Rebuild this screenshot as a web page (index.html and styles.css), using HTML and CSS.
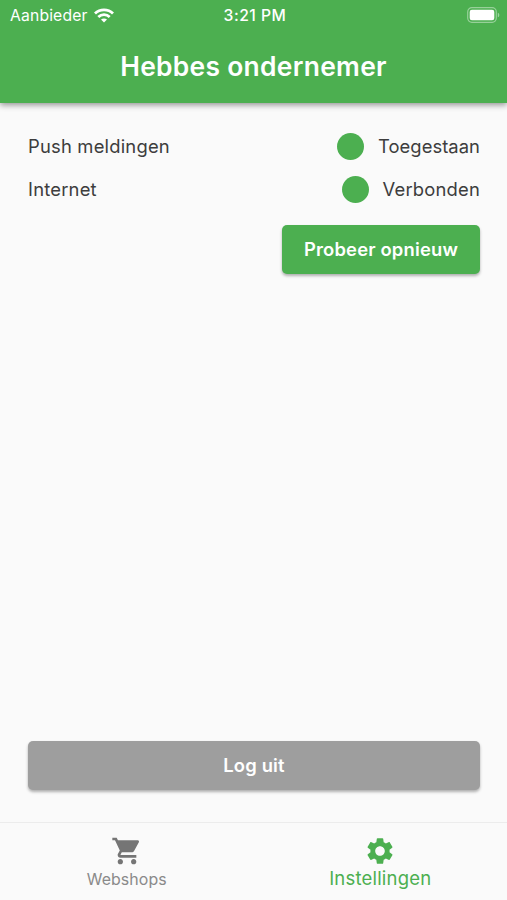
FILE: index.html
```html
<!DOCTYPE html>
<html lang="nl">
<head>
<meta charset="utf-8">
<meta name="viewport" content="width=device-width">
<title>Hebbes ondernemer</title>
<link rel="stylesheet" href="styles.css">
</head>
<body>
<div class="app">
  <header class="app-bar">
    <div class="status">
      <div class="carrier"><span>Aanbieder</span>
        <svg class="wifi" viewBox="0 0 20 15" fill="none" stroke="#fff" stroke-width="2.8"><path d="M1 5.6C6 .7 14 .7 19 5.6M4.3 9C7.6 5.9 12.4 5.9 15.7 9"/><path d="M10 14.6 7 11.6c1.7-1.5 4.3-1.5 6 0z" fill="#fff" stroke="none"/></svg>
      </div>
      <span class="clock">3:21 PM</span>
      <svg class="battery" viewBox="0 0 33 16"><rect x=".7" y=".7" width="28.6" height="14.6" rx="4.2" fill="none" stroke="#fff" stroke-opacity=".42" stroke-width="1.2"/><rect x="2.7" y="2.7" width="24.6" height="10.6" rx="2.2" fill="#fff"/><path d="M30.8 5.7c2 .7 2 3.900 0 4.600z" fill="#fff" fill-opacity=".45"/></svg>
    </div>
    <h1 class="title">Hebbes ondernemer</h1>
  </header>
  <main class="content">
    <div class="row"><span class="text">Push meldingen</span><span class="state"><i class="dot"></i><span class="text allowed">Toegestaan</span></span></div>
    <div class="row"><span class="text">Internet</span><span class="state"><i class="dot"></i><span class="text">Verbonden</span></span></div>
    <button class="button retry">Probeer opnieuw</button>
    <button class="button logout">Log uit</button>
  </main>
  <nav class="tabs">
    <a class="tab"><svg class="icon" viewBox="0 0 24 24" fill="currentColor"><path d="M7 18c-1.100 0-1.990.9-1.990 2S5.900 22 7 22s2-.9 2-2-.9-2-2-2zM1 2v2h2l3.600 7.590-1.350 2.450c-.16.28-.25.610-.25.960 0 1.100.9 2 2 2h12v-2H7.420c-.14 0-.25-.11-.25-.25l.03-.12.900-1.630h7.450c.75 0 1.410-.41 1.750-1.030l3.580-6.490c.08-.14.120-.31.120-.48 0-.55-.45-1-1-1H5.210l-.94-2H1zm16 16c-1.100 0-1.990.9-1.990 2s.89 2 1.990 2 2-.9 2-2-.9-2-2-2z"/></svg><span class="label">Webshops</span></a>
    <a class="tab active"><svg class="icon" viewBox="0 0 24 24" fill="currentColor"><path d="M19.140 12.940c.04-.3.060-.61.060-.94 0-.32-.02-.64-.07-.94l2.030-1.580c.18-.14.230-.41.120-.61l-1.920-3.320c-.12-.22-.37-.29-.59-.22l-2.390.96c-.5-.38-1.030-.7-1.620-.94l-.36-2.540c-.04-.24-.24-.41-.48-.41h-3.840c-.24 0-.43.170-.47.410l-.36 2.540c-.59.240-1.130.570-1.620.940l-2.390-.96c-.22-.08-.47 0-.59.220L2.740 8.870c-.12.210-.08.470.12.610l2.030 1.580c-.05.3-.09.630-.09.940s.02.640.07.940l-2.030 1.580c-.18.140-.23.410-.12.610l1.920 3.320c.12.220.370.290.590.220l2.390-.96c.5.380 1.030.700 1.620.940l.36 2.540c.05.240.240.410.480.410h3.840c.24 0 .44-.17.470-.41l.36-2.540c.59-.24 1.130-.56 1.620-.94l2.390.96c.22.080.470 0 .59-.22l1.920-3.320c.12-.22.070-.47-.12-.61l-2.010-1.580zM12 15.600c-1.980 0-3.600-1.620-3.600-3.600s1.620-3.600 3.600-3.600 3.600 1.620 3.600 3.600-1.620 3.600-3.600 3.600z"/></svg><span class="label">Instellingen</span></a>
  </nav>
</div>
</body>
</html>
```
FILE: styles.css
```css
* { box-sizing: border-box; }
body { margin: 0; background: #fafafa; color: #3d3d3d; font-family: Inter, "Liberation Sans", sans-serif; }
.app { height: 900px; display: flex; flex-direction: column; overflow: hidden; }
.app-bar { height: 103px; flex: none; background: #4caf50; color: #fff; box-shadow: 0 2px 6px rgba(0,0,0,.42); }
.status { height: 29px; padding: 1px 7px 0 10px; display: grid; grid-template-columns: 1fr auto 1fr; align-items: center; font-size: 15.700px; line-height: 20px; }
.carrier { display: flex; align-items: center; gap: 6px; letter-spacing: .16px; }
.carrier span, .clock { padding-top: 2px; }
.wifi { width: 20px; height: 15px; }
.clock { font-weight: 550; letter-spacing: .5px; }
.battery { width: 33px; height: 16px; justify-self: end; }
.title { margin: 0; height: 74px; line-height: 75px; text-align: center; font-size: 26.400px; font-weight: 570; letter-spacing: .3px; }
.content { flex: 1; padding: 22px 27px 32px 28px; display: flex; flex-direction: column; font-size: 18.400px; letter-spacing: .2px; }
.row { height: 43px; display: flex; align-items: center; justify-content: space-between; }
.text { padding-bottom: 2px; }
.allowed { letter-spacing: .05px; }
.state { display: flex; align-items: center; gap: 14px; }
.dot { width: 27px; height: 27px; border-radius: 50%; background: #4caf50; }
.button { height: 49px; border: 0; border-radius: 5px; padding: 0 0 2px; color: #fff; font: 600 18.400px/46px Inter, "Liberation Sans", sans-serif; letter-spacing: .18px; box-shadow: 0 2px 3px rgba(0,0,0,.3); }
.retry { width: 198px; margin-top: 14px; align-self: flex-end; background: #4caf50; }
.logout { width: 100%; margin-top: auto; background: #9e9e9e; }
.tabs { height: 78px; flex: none; display: flex; border-top: 1px solid #ececec; }
.tab { flex: 1; display: flex; flex-direction: column; align-items: center; padding-top: 12px; color: #757575; }
.icon { width: 32px; height: 32px; }
.label { font-size: 15.900px; line-height: 25px; color: #8a8a8a; letter-spacing: .1px; }
.active { color: #4caf50; }
.active .label { font-size: 18.500px; line-height: 22px; color: inherit; letter-spacing: .2px; }
```
